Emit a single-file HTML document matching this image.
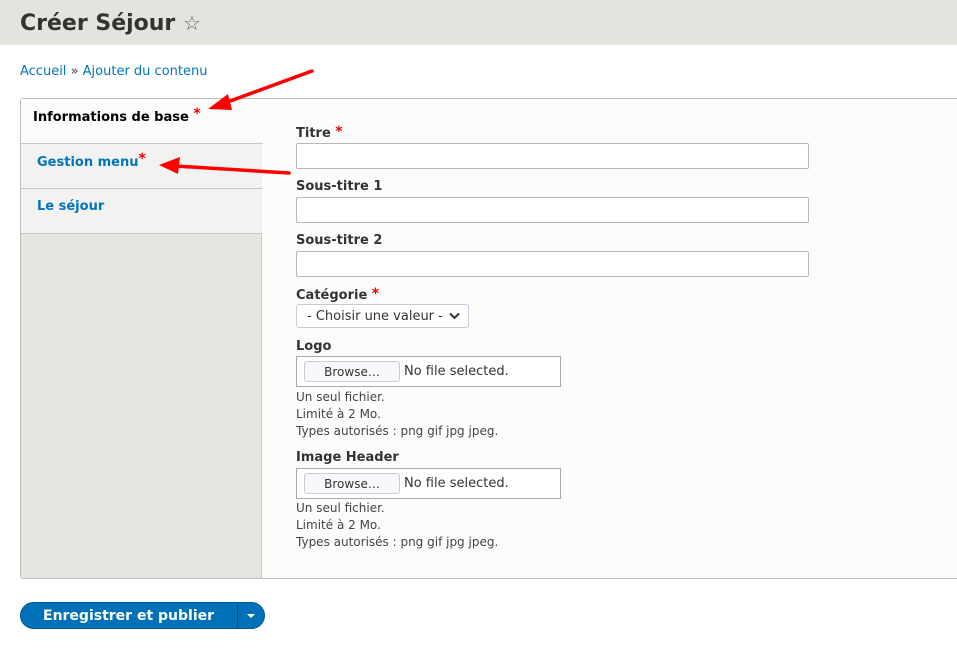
<!DOCTYPE html>
<html><head><meta charset="utf-8"><style>
*{box-sizing:border-box;margin:0;padding:0}
body{width:957px;height:657px;background:#fff;font-family:"DejaVu Sans","Liberation Sans",sans-serif;color:#222;position:relative;overflow:hidden}
.hdr{position:absolute;left:0;top:0;width:957px;height:45px;background:#e4e3dd}
.hdr h1{position:absolute;left:20px;top:11px;font-size:22px;font-weight:bold;color:#333}
.hdr .star{font-weight:normal;color:#666;font-size:20px}
.bc{position:absolute;left:20px;top:64px;font-size:13px;color:#0074bd}
.bc span{color:#444}
.box{position:absolute;left:20px;top:98px;width:945px;height:481px;border:1px solid #bfbfba;border-radius:3px;background:#fcfcfa}
.left{position:absolute;left:0;top:0;width:241px;height:479px;background:#e6e5e1;border-right:1px solid #c9c8c4}
.tab{position:absolute;left:0;width:241px;height:45px;border-bottom:1px solid #c9c8c4;background:#f2f2f0;font-size:13px;font-weight:bold;color:#0074bd;padding:10px 0 0 16px}
.tab.a{background:#fcfcfa;color:#000;padding-left:12px;width:242px;border-right:none}
.st{color:#e00;font-size:14px;position:relative;top:-3px}
.lbl .st{top:-1px}
.lbl{position:absolute;left:296px;font-size:13px;font-weight:bold;color:#333}
.inp{position:absolute;left:296px;width:513px;height:26px;border:1px solid #b8b8b8;border-radius:2px;background:#fff}
.sel{position:absolute;left:296px;top:304px;width:173px;height:24px;border:1px solid #c5ccd8;border-radius:3px;background:#fff;font-size:13px;color:#333;padding:4px 0 0 10px}
.file{position:absolute;left:296px;width:265px;height:31px;border:1px solid #a8a8a8;background:#fff;font-size:13px;color:#333}
.file .b{position:absolute;left:7px;top:4px;width:96px;height:21px;border:1px solid #c5ccd8;border-radius:3px;background:#f8f8fa;text-align:center;font-size:12px;padding-top:3px}
.file .t{position:absolute;left:107px;top:7px}
.help{position:absolute;left:296px;font-size:12px;color:#444;line-height:17px}
.btn{position:absolute;left:20px;top:602px;width:245px;height:27px;border-radius:14px;background:#0071b8;border:1px solid #005a95;color:#fff;font-size:14px;font-weight:bold}
.btn .x{position:absolute;left:22px;top:5px}
.btn .d{position:absolute;left:216px;top:0;width:1px;height:25px;background:#004f80}
.btn .c{position:absolute;left:226px;top:11px;border:4px solid transparent;border-top:4px solid #fff}
</style></head><body>
<div class="hdr"><h1>Créer Séjour <span class="star">☆</span></h1></div>
<div class="bc">Accueil <span>»</span> Ajouter du contenu</div>
<div class="box">
 <div class="left">
  <div class="tab a" style="top:0">Informations de base <span class="st">*</span></div>
  <div class="tab" style="top:45px">Gestion menu<span class="st">*</span></div>
  <div class="tab" style="top:90px">Le séjour</div>
 </div>
</div>
<div class="lbl" style="top:125px">Titre <span class="st">*</span></div>
<div class="inp" style="top:143px"></div>
<div class="lbl" style="top:179px">Sous-titre 1</div>
<div class="inp" style="top:197px"></div>
<div class="lbl" style="top:233px">Sous-titre 2</div>
<div class="inp" style="top:251px"></div>
<div class="lbl" style="top:287px">Catégorie <span class="st">*</span></div>
<div class="sel">- Choisir une valeur -<svg style="position:absolute;right:8px;top:7px" width="11" height="8" viewBox="0 0 11 8"><path d="M1 1.5l4.5 4.5 4.5-4.5" fill="none" stroke="#333" stroke-width="2"/></svg></div>
<div class="lbl" style="top:339px">Logo</div>
<div class="file" style="top:356px"><div class="b">Browse…</div><div class="t">No file selected.</div></div>
<div class="help" style="top:389px">Un seul fichier.<br>Limité à 2 Mo.<br>Types autorisés : png gif jpg jpeg.</div>
<div class="lbl" style="top:450px">Image Header</div>
<div class="file" style="top:468px"><div class="b">Browse…</div><div class="t">No file selected.</div></div>
<div class="help" style="top:500px">Un seul fichier.<br>Limité à 2 Mo.<br>Types autorisés : png gif jpg jpeg.</div>
<div class="btn"><span class="x">Enregistrer et publier</span><span class="d"></span><span class="c"></span></div>
<svg style="position:absolute;left:0;top:0" width="957" height="657">
<path d="M312 71 L222 104" stroke="#f00" stroke-width="3.5" fill="none" stroke-linecap="round"/>
<path d="M208 109 L228 94 L232 110 Z" fill="#f00"/>
<path d="M289 173 L175 166" stroke="#f00" stroke-width="3.5" fill="none" stroke-linecap="round"/>
<path d="M159 165 L180 157 L178 174 Z" fill="#f00"/>
</svg>
</body></html>
